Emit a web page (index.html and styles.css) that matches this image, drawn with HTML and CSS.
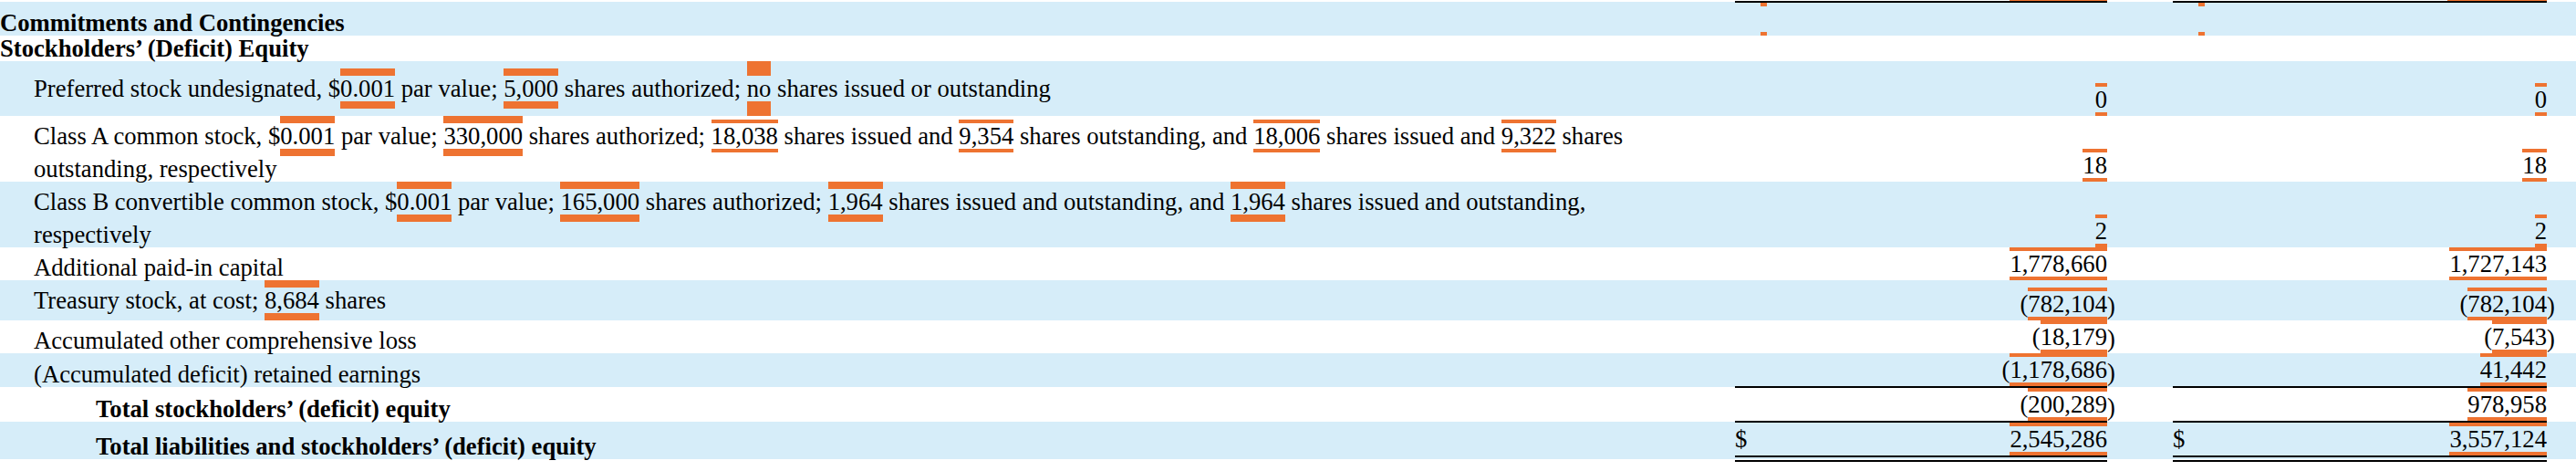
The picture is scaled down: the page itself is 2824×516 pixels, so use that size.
FILE: index.html
```html
<!DOCTYPE html>
<html lang="en">
<head>
<meta charset="utf-8">
<title>Balance sheet – Stockholders’ (Deficit) Equity</title>
<link rel="stylesheet" href="styles.css">
</head>
<body>
<table class="bs">
  <colgroup>
    <col class="c-lbl"><col class="c-sp1"><col class="c-cur"><col class="c-numa"><col class="c-par"><col class="c-sp2"><col class="c-cur"><col class="c-numb"><col class="c-par"><col class="c-end">
  </colgroup>
  <tr class="prev">
    <td></td><td></td>
    <td class="cur line1"></td><td class="num line1"><div class="tail tail-a"></div></td>
    <td></td><td></td>
    <td class="cur line1"></td><td class="num line1"><div class="tail tail-b"></div></td>
    <td></td><td></td>
  </tr>
  <tr class="shade">
    <td class="lbl head">Commitments and Contingencies</td><td></td>
    <td class="cur"></td><td class="num lft"><span class="x mk"></span></td><td class="par"></td><td></td>
    <td class="cur"></td><td class="num lft"><span class="x mk"></span></td><td class="par"></td><td></td>
  </tr>
  <tr>
    <td class="lbl head">Stockholders’ (Deficit) Equity</td><td></td>
    <td class="cur"></td><td class="num"></td><td class="par"></td><td></td>
    <td class="cur"></td><td class="num"></td><td class="par"></td><td></td>
  </tr>
  <tr class="shade">
    <td class="lbl ind">Preferred stock undesignated, $<span class="x x2">0.001</span> par value; <span class="x x2">5,000</span> shares authorized; <span class="x x4">no</span> shares issued or outstanding</td><td></td>
    <td class="cur"></td><td class="num"><span class="x">0</span></td><td class="par"></td><td></td>
    <td class="cur"></td><td class="num"><span class="x">0</span></td><td class="par"></td><td></td>
  </tr>
  <tr>
    <td class="lbl ind">Class A common stock, $<span class="x x2">0.001</span> par value; <span class="x x2">330,000</span> shares authorized; <span class="x">18,038</span> shares issued and <span class="x">9,354</span> shares outstanding, and <span class="x">18,006</span> shares issued and <span class="x">9,322</span> shares outstanding, respectively</td><td></td>
    <td class="cur"></td><td class="num"><span class="x">18</span></td><td class="par"></td><td></td>
    <td class="cur"></td><td class="num"><span class="x">18</span></td><td class="par"></td><td></td>
  </tr>
  <tr class="shade">
    <td class="lbl ind">Class B convertible common stock, $<span class="x x2">0.001</span> par value; <span class="x x2">165,000</span> shares authorized; <span class="x x2">1,964</span> shares issued and outstanding, and <span class="x x2">1,964</span> shares issued and outstanding, respectively</td><td></td>
    <td class="cur"></td><td class="num"><span class="x">2</span></td><td class="par"></td><td></td>
    <td class="cur"></td><td class="num"><span class="x">2</span></td><td class="par"></td><td></td>
  </tr>
  <tr>
    <td class="lbl ind">Additional paid-in capital</td><td></td>
    <td class="cur"></td><td class="num"><span class="x">1,778,660</span></td><td class="par"></td><td></td>
    <td class="cur"></td><td class="num"><span class="x">1,727,143</span></td><td class="par"></td><td></td>
  </tr>
  <tr class="shade">
    <td class="lbl ind">Treasury stock, at cost; <span class="x x2">8,684</span> shares</td><td></td>
    <td class="cur"></td><td class="num">(<span class="x">782,104</span></td><td class="par">)</td><td></td>
    <td class="cur"></td><td class="num">(<span class="x">782,104</span></td><td class="par">)</td><td></td>
  </tr>
  <tr>
    <td class="lbl ind">Accumulated other comprehensive loss</td><td></td>
    <td class="cur"></td><td class="num">(<span class="x">18,179</span></td><td class="par">)</td><td></td>
    <td class="cur"></td><td class="num">(<span class="x">7,543</span></td><td class="par">)</td><td></td>
  </tr>
  <tr class="shade">
    <td class="lbl ind">(Accumulated deficit) retained earnings</td><td></td>
    <td class="cur line1"></td><td class="num line1">(<span class="x">1,178,686</span></td><td class="par">)</td><td></td>
    <td class="cur line1"></td><td class="num line1"><span class="x">41,442</span></td><td class="par"></td><td></td>
  </tr>
  <tr>
    <td class="lbl tot head">Total stockholders’ (deficit) equity</td><td></td>
    <td class="cur line1"></td><td class="num line1">(<span class="x">200,289</span></td><td class="par">)</td><td></td>
    <td class="cur line1"></td><td class="num line1"><span class="x">978,958</span></td><td class="par"></td><td></td>
  </tr>
  <tr class="shade">
    <td class="lbl tot head">Total liabilities and stockholders’ (deficit) equity</td><td></td>
    <td class="cur line2"><span class="ghost">$</span></td><td class="num line2"><span class="x">2,545,286</span></td><td class="par"></td><td></td>
    <td class="cur line2"><span class="ghost">$</span></td><td class="num line2"><span class="x">3,557,124</span></td><td class="par"></td><td></td>
  </tr>
</table>
</body>
</html>
```

FILE: styles.css
```css
html, body {
  margin: 0;
  padding: 0;
  background: #ffffff;
}

.bs {
  width: 2824px;
  table-layout: fixed;
  border-collapse: collapse;
  font-family: "Liberation Serif", "Times New Roman", serif;
  font-size: 26.67px;
  line-height: 28px;
  color: #000000;
}

.c-lbl { width: 1880px; }
.c-sp1 { width: 22px; }
.c-cur { width: 28px; }
.c-numa { width: 380px; }
.c-numb { width: 382px; }
.c-par { width: 20px; }
.c-sp2 { width: 52px; }
.c-end { width: 12px; }

.bs td {
  padding: 0;
  vertical-align: bottom;
  white-space: normal;
}

.shade {
  background: #d6edf9;
}

.bs td.lbl {
  padding-right: 60px;
}

.head {
  font-weight: bold;
}

.bs td.ind {
  padding-left: 37px;
}

.bs td.tot {
  padding-left: 105px;
}

.num {
  text-align: right;
  white-space: nowrap;
}

.num.lft {
  text-align: left;
}

.par {
  text-align: left;
}

.bs td.par {
  padding-bottom: 2px;
}

.cur {
  text-align: left;
}

/* XBRL fact highlight bars */
.x {
  display: inline-block;
  border-style: solid none;
  border-color: #ee7331;
  border-width: 4px 0;
}

.x2 {
  border-width: 8px 0;
}

.x4 {
  border-width: 16px 0;
}

.mk {
  width: 7px;
  height: 28px;
  vertical-align: bottom;
}

.ghost {
  display: inline-block;
  border-style: solid none;
  border-color: transparent;
  border-width: 4px 0;
}

/* rules under totals */
.line1 {
  border-bottom: 2px solid #000000;
}

.line2 {
  border-bottom: 7px double #000000;
}

/* partial previous row at top edge */
.prev td {
  height: 1px;
  font-size: 0;
  line-height: 0;
}

.tail {
  height: 1px;
  margin-left: auto;
  background: #ee7331;
}

.tail-a {
  width: 107px;
}

.tail-b {
  width: 109px;
}
```
